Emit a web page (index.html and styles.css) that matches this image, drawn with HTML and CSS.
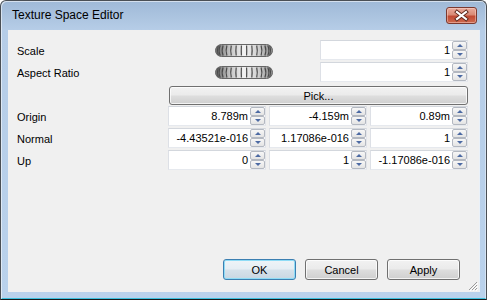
FILE: index.html
```html
<!DOCTYPE html>
<html>
<head>
<meta charset="utf-8">
<link rel="stylesheet" href="styles.css">
</head>
<body>
<div class="window">
  <div class="titlebar">
    <span class="title">Texture Space Editor</span>
    <div class="close">
      <svg width="29" height="15" viewBox="0 0 29 15">
        <path d="M10 4 L19 11 M19 4 L10 11" stroke="#5b2418" stroke-width="4" stroke-linecap="square" fill="none"/>
        <path d="M10 4 L19 11 M19 4 L10 11" stroke="#ffffff" stroke-width="2.2" stroke-linecap="square" fill="none"/>
      </svg>
    </div>
  </div>
  <div class="client">
    <div class="form">
      <div class="label">Scale</div>
      <div class="wide">
        <div class="slider-cell">
          <svg class="slider" width="58" height="13" viewBox="0 0 58 13">
            <defs>
              <linearGradient id="sg" x1="0" y1="0" x2="1" y2="0">
                <stop offset="0" stop-color="#6a6a6a"/>
                <stop offset="0.25" stop-color="#c4c4c4"/>
                <stop offset="0.5" stop-color="#f2f2f2"/>
                <stop offset="0.75" stop-color="#d0d0d0"/>
                <stop offset="1" stop-color="#8a8a8a"/>
              </linearGradient>
            </defs>
            <rect x="0.5" y="0.5" width="57" height="12" rx="6" fill="url(#sg)" stroke="#666666"/>
            <g stroke="#4a4a4a" stroke-width="1.2" fill="none">
              <path d="M3.2 2 Q1.8 6.5 3.2 11"/>
              <path d="M5.2 1.5 Q3.0 6.5 5.2 11.5"/>
              <path d="M8.1 1.5 Q6.2 6.5 8.1 11.5"/>
              <path d="M11.9 1.5 Q10.3 6.5 11.9 11.5"/>
              <path d="M16.3 1.5 Q15.1 6.5 16.3 11.5"/>
              <path d="M21.2 1.5 Q20.5 6.5 21.2 11.5"/>
              <path d="M26.4 1.5 Q26.1 6.5 26.4 11.5"/>
              <path d="M31.6 1.5 Q31.9 6.5 31.6 11.5"/>
              <path d="M36.8 1.5 Q37.5 6.5 36.8 11.5"/>
              <path d="M41.7 1.5 Q42.9 6.5 41.7 11.5"/>
              <path d="M46.1 1.5 Q47.7 6.5 46.1 11.5"/>
              <path d="M49.9 1.5 Q51.8 6.5 49.9 11.5"/>
              <path d="M52.8 1.5 Q55.0 6.5 52.8 11.5"/>
              <path d="M54.8 2 Q56.2 6.5 54.8 11"/>
            </g>
          </svg>
        </div>
        <div class="spin"><span class="val">1</span><div class="arrows"><div class="btn"><i class="up"></i></div><div class="btn"><i class="down"></i></div></div></div>
      </div>

      <div class="label">Aspect Ratio</div>
      <div class="wide">
        <div class="slider-cell">
          <svg class="slider" width="58" height="13" viewBox="0 0 58 13">
            <rect x="0.5" y="0.5" width="57" height="12" rx="6" fill="url(#sg)" stroke="#666666"/>
            <g stroke="#4a4a4a" stroke-width="1.2" fill="none">
              <path d="M3.2 2 Q1.8 6.5 3.2 11"/>
              <path d="M5.2 1.5 Q3.0 6.5 5.2 11.5"/>
              <path d="M8.1 1.5 Q6.2 6.5 8.1 11.5"/>
              <path d="M11.9 1.5 Q10.3 6.5 11.9 11.5"/>
              <path d="M16.3 1.5 Q15.1 6.5 16.3 11.5"/>
              <path d="M21.2 1.5 Q20.5 6.5 21.2 11.5"/>
              <path d="M26.4 1.5 Q26.1 6.5 26.4 11.5"/>
              <path d="M31.6 1.5 Q31.9 6.5 31.6 11.5"/>
              <path d="M36.8 1.5 Q37.5 6.5 36.8 11.5"/>
              <path d="M41.7 1.5 Q42.9 6.5 41.7 11.5"/>
              <path d="M46.1 1.5 Q47.7 6.5 46.1 11.5"/>
              <path d="M49.9 1.5 Q51.8 6.5 49.9 11.5"/>
              <path d="M52.8 1.5 Q55.0 6.5 52.8 11.5"/>
              <path d="M54.8 2 Q56.2 6.5 54.8 11"/>
            </g>
          </svg>
        </div>
        <div class="spin"><span class="val">1</span><div class="arrows"><div class="btn"><i class="up"></i></div><div class="btn"><i class="down"></i></div></div></div>
      </div>

      <div class="pick-cell"><div class="button pick">Pick...</div></div>

      <div class="label">Origin</div>
      <div class="spin"><span class="val">8.789m</span><div class="arrows"><div class="btn"><i class="up"></i></div><div class="btn"><i class="down"></i></div></div></div>
      <div class="spin"><span class="val">-4.159m</span><div class="arrows"><div class="btn"><i class="up"></i></div><div class="btn"><i class="down"></i></div></div></div>
      <div class="spin"><span class="val">0.89m</span><div class="arrows"><div class="btn"><i class="up"></i></div><div class="btn"><i class="down"></i></div></div></div>

      <div class="label">Normal</div>
      <div class="spin"><span class="val">-4.43521e-016</span><div class="arrows"><div class="btn"><i class="up"></i></div><div class="btn"><i class="down"></i></div></div></div>
      <div class="spin"><span class="val">1.17086e-016</span><div class="arrows"><div class="btn"><i class="up"></i></div><div class="btn"><i class="down"></i></div></div></div>
      <div class="spin"><span class="val">1</span><div class="arrows"><div class="btn"><i class="up"></i></div><div class="btn"><i class="down"></i></div></div></div>

      <div class="label">Up</div>
      <div class="spin"><span class="val">0</span><div class="arrows"><div class="btn"><i class="up"></i></div><div class="btn"><i class="down"></i></div></div></div>
      <div class="spin"><span class="val">1</span><div class="arrows"><div class="btn"><i class="up"></i></div><div class="btn"><i class="down"></i></div></div></div>
      <div class="spin"><span class="val">-1.17086e-016</span><div class="arrows"><div class="btn"><i class="up"></i></div><div class="btn"><i class="down"></i></div></div></div>
    </div>

    <div class="buttons">
      <div class="button default">OK</div>
      <div class="button">Cancel</div>
      <div class="button">Apply</div>
    </div>

    <svg class="grip" width="10" height="10" viewBox="0 0 10 10">
      <g stroke="#ffffff" stroke-width="1">
        <path d="M10 2 L2 10 M10 5 L5 10 M10 8 L8 10"/>
      </g>
      <g stroke="#9a9a9a" stroke-width="1">
        <path d="M9 1 L1 9 M9 4 L4 9 M9 7 L7 9"/>
      </g>
    </svg>
  </div>
</div>
</body>
</html>
```

FILE: styles.css
```css
html, body {
  margin: 0;
  padding: 0;
  background: #ffffff;
}

.window {
  width: 487px;
  height: 300px;
  box-sizing: border-box;
  border: 1px solid #4a4f55;
  border-bottom-color: #1a1a1a;
  border-radius: 6px 6px 0 0;
  background: linear-gradient(#9fb9d7 0px, #b6cde7 29px, #bad2ec 100%);
  box-shadow: inset 1px 1px 0 rgba(255, 255, 255, 0.55), inset -1px 0 0 rgba(255, 255, 255, 0.4), inset 0 -1px 0 #3cc0de;
  padding: 0 7px 7px 7px;
  display: flex;
  flex-direction: column;
  font-family: "Liberation Sans", Arial, sans-serif;
}

.titlebar {
  height: 29px;
  display: flex;
  align-items: center;
  justify-content: space-between;
  padding: 0 2px 0 4px;
}

.title {
  font-size: 12px;
  color: #000;
  margin-top: -1px;
}

.close {
  width: 31px;
  height: 17px;
  box-sizing: border-box;
  border: 1px solid #7c3a30;
  border-radius: 3px;
  background: linear-gradient(#e9ab9c 0%, #d98a75 45%, #c14a33 55%, #cd6a4f 100%);
  box-shadow: inset 0 0 0 1px rgba(255, 220, 210, 0.45);
  display: flex;
  align-items: center;
  justify-content: center;
  margin-top: -1px;
}

.close svg {
  display: block;
}

.client {
  position: relative;
  flex: 1;
  background: #f0f0f0;
  box-shadow: 1px 0 0 rgba(255, 255, 255, 0.7);
  display: flex;
  flex-direction: column;
  padding: 10px 11px 12px 9px;
  box-sizing: border-box;
  font-size: 11px;
  color: #000;
}

.form {
  display: grid;
  grid-template-columns: 148px 98px 98px 98px;
  grid-auto-rows: 20px;
  column-gap: 3px;
  row-gap: 2px;
}

.label {
  grid-column: 1;
  display: flex;
  align-items: center;
  padding-top: 1px;
}

.wide {
  grid-column: 2 / span 3;
  display: flex;
  gap: 2px;
}

.slider-cell {
  width: 150px;
  display: flex;
  align-items: center;
  justify-content: center;
}

.slider {
  display: block;
  margin-left: 1px;
}

.wide .spin {
  width: 148px;
}

.spin {
  box-sizing: border-box;
  height: 20px;
  border: 1px solid;
  border-color: #d3d7dd #e2e4e9 #e6e9ee #dde0e6;
  background: #ffffff;
  display: flex;
  align-items: stretch;
}

.val {
  flex: 1;
  text-align: right;
  padding-right: 2px;
  line-height: 18px;
  white-space: nowrap;
  overflow: hidden;
}

.arrows {
  width: 15px;
  display: flex;
  flex-direction: column;
}

.btn {
  flex: 1;
  box-sizing: border-box;
  border: 1px solid #b3b8c1;
  border-radius: 2px;
  background: linear-gradient(#f7f7f7, #e4e4e4);
  display: flex;
  align-items: center;
  justify-content: center;
}

.up {
  width: 0;
  height: 0;
  border-left: 3.5px solid transparent;
  border-right: 3.5px solid transparent;
  border-bottom: 3px solid #4c6aa3;
}

.down {
  width: 0;
  height: 0;
  border-left: 3.5px solid transparent;
  border-right: 3.5px solid transparent;
  border-top: 3px solid #4c6aa3;
}

.pick-cell {
  grid-column: 2 / span 3;
  margin-top: 2px;
  height: 19px;
  display: flex;
  padding-left: 1px;
}

.button {
  box-sizing: border-box;
  border: 1px solid #707070;
  border-radius: 3px;
  background: linear-gradient(#f2f2f2 0%, #ebebeb 45%, #dddddd 55%, #cfcfcf 100%);
  box-shadow: inset 0 0 0 1px rgba(255, 255, 255, 0.75);
  display: flex;
  align-items: center;
  justify-content: center;
  font-size: 11px;
  color: #000;
}

.pick {
  flex: 1;
  height: 19px;
  padding-top: 1px;
}

.buttons {
  margin-top: auto;
  display: flex;
  justify-content: flex-end;
  gap: 9px;
  margin-right: 8px;
}

.buttons .button {
  width: 73px;
  height: 21px;
}

.button.default {
  border-color: #3c7fb1;
  background: linear-gradient(#eef4f8 0%, #e6eef4 45%, #d5e1ea 55%, #c9d7e2 100%);
  box-shadow: inset 0 0 0 1px #8fdcf6;
}

.grip {
  position: absolute;
  right: 1px;
  bottom: 1px;
  display: block;
}
```
